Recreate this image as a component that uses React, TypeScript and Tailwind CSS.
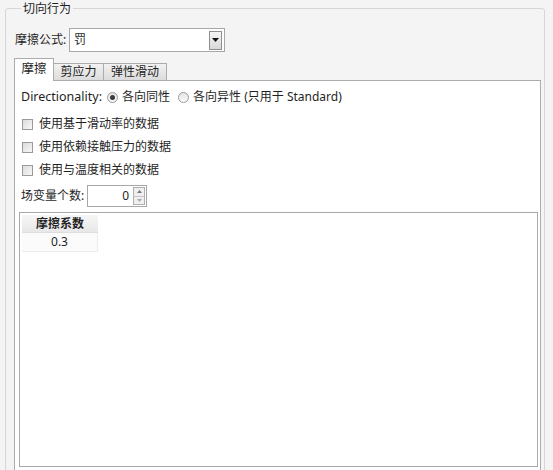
import React from "react";

const checks = ["使用基于滑动率的数据", "使用依赖接触压力的数据", "使用与温度相关的数据"];

function Radio({ checked }: { checked?: boolean }) {
  return (
    <span className="inline-flex w-[11px] h-[11px] rounded-full border border-[#9a9a9a] bg-gradient-to-b from-[#e4e4e4] to-[#fafafa] items-center justify-center">
      {checked && <span className="w-[5px] h-[5px] rounded-full bg-[#3a3a3a]" />}
    </span>
  );
}

export default function App() {
  return (
    <div
      className="w-[553px] h-[470px] overflow-hidden bg-[#f4f4f4] text-[12px] text-[#1f1f1f] pl-[5px] pr-[8px] whitespace-nowrap"
      style={{ fontFamily: '"Noto Sans", "Noto Sans CJK SC", sans-serif' }}
    >
      <fieldset className="border border-[#d6d6d6] rounded-[3px] pl-[8px] pr-[3px] h-[480px]">
        <legend className="ml-[7px] px-[2px] leading-[17px]">切向行为</legend>

        {/* formula */}
        <div className="flex items-center mt-[11px] h-[24px]">
          <span className="ml-[1px] w-[54px] shrink-0">摩擦公式:</span>
          <div className="flex items-center w-[156px] h-[24px] border border-[#a7a7a7] bg-white pl-[4px] pr-[2px]">
            <span className="flex-1">罚</span>
            <span className="flex items-center justify-center w-[13px] h-[19px] border border-[#8e8e8e] bg-gradient-to-b from-[#f4f4f4] to-[#d9d9d9]">
              <svg width="7" height="4" viewBox="0 0 7 4">
                <path d="M0 0h7L3.5 4z" fill="#111" />
              </svg>
            </span>
          </div>
        </div>

        {/* tabs */}
        <div className="flex items-end mt-[6px] h-[23px] relative z-10">
          <div className="h-[23px] w-[40px] border border-b-0 border-[#acacac] bg-white flex items-center justify-center pb-[1px] text-[12.5px]">摩擦</div>
          <div className="h-[18px] w-[50px] border border-l-0 border-[#acacac] bg-gradient-to-b from-[#f2f2f2] to-[#dcdcdc] flex items-center justify-center">剪应力</div>
          <div className="h-[18px] w-[63px] border border-l-0 border-[#acacac] bg-gradient-to-b from-[#f2f2f2] to-[#dcdcdc] flex items-center justify-center">弹性滑动</div>
        </div>

        <div className="-mt-[1px] border border-[#acacac] bg-white h-[391px] pl-[7px] pr-[2px]">
          <div className="flex items-center h-[16px] mt-[8px] -ml-[1px]">
            <span className="mr-[5px] text-[12.5px]">Directionality:</span>
            <Radio checked />
            <span className="ml-[4px] mr-[8px]">各向同性</span>
            <Radio />
            <span className="ml-[4px]">各向异性 (只用于 Standard)</span>
          </div>

          {checks.map((c, i) => (
            <div key={c} className={`flex items-center h-[16px] ${i === 0 ? "mt-[11px]" : "mt-[7px]"}`}>
              <span className="w-[11px] h-[11px] border border-[#9a9a9a] bg-gradient-to-br from-[#dcdcdc] to-[#f7f7f7]" />
              <span className="ml-[6px]">{c}</span>
            </div>
          ))}

          <div className="flex items-center h-[22px] mt-[7px] -ml-[1px]">
            <span className="w-[66px] shrink-0">场变量个数:</span>
            <div className="flex items-center w-[60px] h-[22px] border border-[#a7a7a7] bg-white pr-[1px]">
              <span className="flex-1 text-right pr-[4px]">0</span>
              <div className="flex flex-col w-[12px] h-[18px] border border-[#b0b0b0]">
                <span className="flex-1 flex items-center justify-center bg-[#f0f0f0] border-b border-[#c8c8c8]">
                  <svg width="5" height="3" viewBox="0 0 5 3"><path d="M0 3h5L2.5 0z" fill="#777" /></svg>
                </span>
                <span className="flex-1 flex items-center justify-center bg-[#f0f0f0]">
                  <svg width="5" height="3" viewBox="0 0 5 3"><path d="M0 0h5L2.5 3z" fill="#aaa" /></svg>
                </span>
              </div>
            </div>
          </div>

          {/* table */}
          <div className="mt-[5px] -ml-[3px] border border-[#a9a9a9] bg-white h-[255px] p-[2px]">
            <div className="w-[76px]">
              <div className="h-[18px] bg-gradient-to-b from-[#f6f6f6] to-[#e8e8e8] border-b border-[#dedede] flex items-center justify-center font-bold text-[#222]">
                摩擦系数
              </div>
              <div className="h-[19px] bg-[#fbfbfb] flex items-center justify-center border-b border-r border-[#ececec]">0.3</div>
            </div>
          </div>
        </div>
      </fieldset>
    </div>
  );
}
